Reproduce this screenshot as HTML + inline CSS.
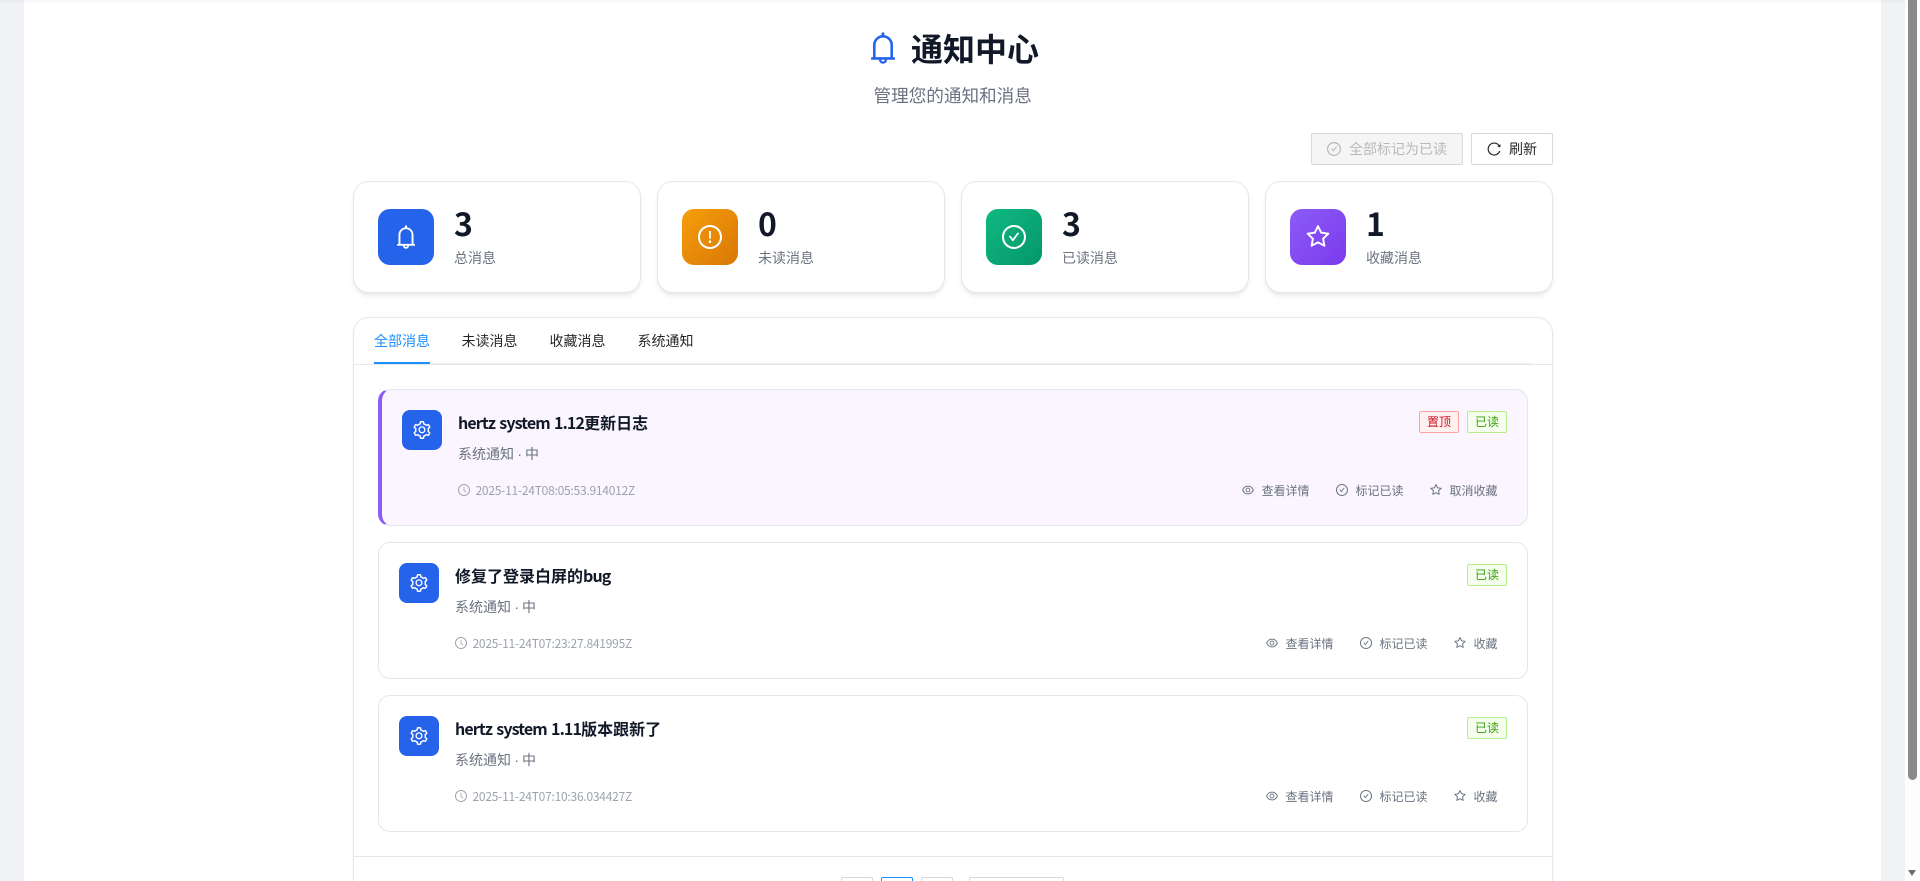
<!DOCTYPE html>
<html lang="zh-CN">
<head>
<meta charset="utf-8">
<title>通知中心</title>
<style>
*{box-sizing:border-box;margin:0;padding:0}
html,body{width:1920px;height:881px;overflow:hidden;background:#f0f2f5;font-family:"Noto Sans CJK SC","Liberation Sans",sans-serif;color:#111827}
#app{position:relative;width:1920px;height:881px;overflow:hidden;background:#f0f2f5}
svg.i{display:block;fill:currentColor}
.abs{position:absolute;white-space:nowrap}
#main{position:absolute;left:24px;top:0;width:1857px;height:881px;background:#fff}
#topfade{position:absolute;left:0;top:0;width:1905px;height:4px;background:linear-gradient(rgba(0,0,0,.045),rgba(0,0,0,0));z-index:5}
#scroll{position:absolute;left:1905px;top:0;width:15px;height:881px;background:#fdfdfd}
#thumb{position:absolute;left:3px;top:0;width:9px;height:780px;background:#8a8a8a;border-radius:0 0 5px 5px}
#arrow{position:absolute;left:3px;top:870px;width:0;height:0;border-left:4.5px solid transparent;border-right:4.5px solid transparent;border-top:6.5px solid #6f6f6f}
h1{position:absolute;left:911px;top:24px;font-size:32px;line-height:48px;font-weight:700;color:#111827;white-space:nowrap}
.sub{position:absolute;left:873.5px;top:83px;font-size:17.6px;line-height:26px;color:#6b7280;white-space:nowrap}
.btn{position:absolute;top:133px;height:32px;border:1px solid #d9d9d9;border-radius:2px;background:#fff;font-size:14px;line-height:30px;display:flex;align-items:center;padding:0 15px;color:rgba(0,0,0,.85);white-space:nowrap;font-family:inherit}
.btn svg{margin-right:8px}
.btn.dis{background:#f5f5f5;color:rgba(0,0,0,.25)}
.stat{position:absolute;top:181px;width:288px;height:112px;background:#fff;border:1px solid #e5e7eb;border-radius:16px;box-shadow:0 4px 6px -1px rgba(0,0,0,.08),0 2px 4px -2px rgba(0,0,0,.05)}
.stat .ic{position:absolute;left:24px;top:27px;width:56px;height:56px;border-radius:12px;display:flex;align-items:center;justify-content:center;color:#fff}
.stat .n{position:absolute;left:100px;top:18px;font-size:32px;line-height:46px;font-weight:700;color:#111827}
.stat .l{position:absolute;left:100px;top:65px;font-size:14px;line-height:22px;color:#6b7280;white-space:nowrap}
#panel{position:absolute;left:353px;top:317px;width:1200px;height:564px;background:#fff;border:1px solid #e5e7eb;border-bottom:none;border-radius:16px 16px 0 0;box-shadow:0 1px 3px rgba(0,0,0,.05)}
.tab{position:absolute;top:330px;font-size:14px;line-height:22px;color:rgba(0,0,0,.85);white-space:nowrap}
.tab.on{color:#1890ff}
#ink{position:absolute;left:374px;top:362px;width:56px;height:2px;background:#1890ff;z-index:2}
#navline{position:absolute;left:374px;top:363px;width:1158px;height:1px;background:#f0f0f0}
#panelline{position:absolute;left:354px;top:364px;width:1198px;height:1px;background:#e5e7eb}
.item{position:absolute;left:378px;width:1150px;height:137px;background:#fff;border:1px solid #e5e7eb;border-radius:12px}
.item.pin{background:#faf5ff;border-left:4px solid #8b5cf6}
.item .ic{position:absolute;left:20px;top:20px;width:40px;height:40px;border-radius:8px;background:#2563eb;color:#fff;display:flex;align-items:center;justify-content:center}
.item .t{position:absolute;left:76px;top:20px;font-size:16px;line-height:24px;font-weight:600;color:#111827;white-space:nowrap}
.item .t b{font-weight:600;letter-spacing:-.88px;word-spacing:1.5px}
.item .s{position:absolute;left:76px;top:53px;font-size:14px;line-height:22px;color:#6b7280;white-space:nowrap}
.item .s i{font-style:normal;font-family:"Liberation Sans",sans-serif;letter-spacing:-.5px}
.item .time{position:absolute;left:76px;top:90px;height:20px;display:flex;align-items:center;font-size:12px;color:#9ca3af;white-space:nowrap;letter-spacing:-.24px}
.item .time svg{margin-right:5.5px}
.tags{position:absolute;right:20px;top:21px;display:flex}
.tag{height:22px;width:40px;border:1px solid;border-radius:2px;font-size:12px;line-height:20px;text-align:center;margin-left:8px}
.tag.red{color:#cf1322;background:#fff1f0;border-color:#ffa39e}
.tag.green{color:#389e0d;background:#f6ffed;border-color:#b7eb8f}
.acts{position:absolute;right:29.5px;top:90px;height:20px;display:flex;align-items:center;font-size:12px;color:#6b7280;white-space:nowrap}
.acts span{display:flex;align-items:center;margin-left:27px}
.acts svg{margin-right:7px}
#sep{position:absolute;left:354px;top:856px;width:1198px;height:1px;background:#e5e7eb}
.pg{position:absolute;top:877px;height:4px;width:32px;border:1px solid #d9d9d9;border-bottom:none;border-radius:2px 2px 0 0;background:#fff}
.pg.on{border-color:#1890ff}
</style>
</head>
<body>
<svg width="0" height="0" style="position:absolute">
<defs>
<symbol id="bell" viewBox="64 64 896 896"><path d="M816 768h-24V428c0-141.1-104.3-257.7-240-277.1V112c0-22.1-17.9-40-40-40s-40 17.9-40 40v38.9c-135.7 19.4-240 136-240 277.1v340h-24c-17.7 0-32 14.3-32 32v32c0 4.4 3.6 8 8 8h216c0 61.8 50.2 112 112 112s112-50.2 112-112h216c4.4 0 8-3.6 8-8v-32c0-17.7-14.3-32-32-32zM512 888c-26.5 0-48-21.5-48-48h96c0 26.5-21.5 48-48 48zM304 768V428c0-55.6 21.6-107.8 60.9-147.1S456.4 220 512 220c55.6 0 107.8 21.6 147.1 60.9S720 372.4 720 428v340H304z"/></symbol>
<symbol id="excl" viewBox="64 64 896 896"><path d="M512 64C264.6 64 64 264.6 64 512s200.6 448 448 448 448-200.6 448-448S759.4 64 512 64zm0 820c-205.4 0-372-166.6-372-372s166.6-372 372-372 372 166.6 372 372-166.6 372-372 372z"/><path d="M464 688a48 48 0 1 0 96 0 48 48 0 1 0-96 0zm24-112h48c4.4 0 8-3.6 8-8V296c0-4.4-3.6-8-8-8h-48c-4.4 0-8 3.6-8 8v272c0 4.4 3.6 8 8 8z"/></symbol>
<symbol id="check" viewBox="64 64 896 896"><path d="M699 353h-46.9c-10.2 0-19.9 4.9-25.9 13.3L469 584.3l-71.2-98.8c-6-8.3-15.6-13.3-25.9-13.3H325c-6.5 0-10.3 7.4-6.5 12.7l124.6 172.8a31.8 31.8 0 0 0 51.7 0l210.6-292c3.9-5.3.1-12.7-6.4-12.7z"/><path d="M512 64C264.6 64 64 264.6 64 512s200.6 448 448 448 448-200.6 448-448S759.4 64 512 64zm0 820c-205.4 0-372-166.6-372-372s166.6-372 372-372 372 166.6 372 372-166.6 372-372 372z"/></symbol>
<symbol id="star" viewBox="64 64 896 896"><path d="M908.1 353.1l-253.9-36.9L540.7 86.1c-3.1-6.3-8.2-11.4-14.5-14.5-15.8-7.8-35-1.3-42.9 14.5L369.8 316.2l-253.9 36.9c-7 1-13.4 4.3-18.3 9.3a32.05 32.05 0 0 0 .6 45.3l183.7 179.1-43.4 252.9a31.95 31.95 0 0 0 46.4 33.7L512 754l227.1 119.4c6.2 3.3 13.4 4.4 20.3 3.2 17.4-3 29.1-19.5 26.1-36.9l-43.4-252.9 183.7-179.1c5-4.9 8.3-11.3 9.3-18.3 2.7-17.5-9.5-33.7-27-36.3zM664.8 561.6l36.1 210.3L512 672.7 323.1 772l36.1-210.3-152.8-149L417.6 382 512 190.7 606.4 382l211.2 30.7-152.8 148.9z"/></symbol>
<symbol id="eye" viewBox="64 64 896 896"><path d="M942.2 486.2C847.4 286.5 704.1 186 512 186c-192.2 0-335.4 100.5-430.2 300.3a60.3 60.3 0 0 0 0 51.5C176.6 737.5 319.9 838 512 838c192.2 0 335.4-100.5 430.2-300.3 7.7-16.2 7.7-35 0-51.5zM512 766c-161.3 0-279.4-81.8-362.7-254C232.6 339.8 350.7 258 512 258c161.3 0 279.4 81.8 362.7 254C791.5 684.2 673.4 766 512 766zm-4-430c-97.2 0-176 78.8-176 176s78.8 176 176 176 176-78.8 176-176-78.8-176-176-176zm0 288c-61.9 0-112-50.1-112-112s50.1-112 112-112 112 50.1 112 112-50.1 112-112 112z"/></symbol>
<symbol id="clock" viewBox="64 64 896 896"><path d="M512 64C264.6 64 64 264.6 64 512s200.6 448 448 448 448-200.6 448-448S759.4 64 512 64zm0 820c-205.4 0-372-166.6-372-372s166.6-372 372-372 372 166.6 372 372-166.6 372-372 372z"/><path d="M686.7 638.6L544.1 535.5V288c0-4.4-3.6-8-8-8H488c-4.4 0-8 3.6-8 8v275.4c0 2.6 1.2 5 3.3 6.5l165.4 120.6c3.6 2.6 8.6 1.8 11.2-1.7l28.6-39c2.6-3.7 1.8-8.7-1.8-11.2z"/></symbol>
<symbol id="reload" viewBox="64 64 896 896"><path d="M909.1 209.3l-56.4 44.1C775.8 155.1 656.2 92 521.9 92 290 92 102.3 279.5 102 511.5 101.7 743.7 289.8 932 521.9 932c181.3 0 335.8-115 394.6-276.1 1.5-4.2-.7-8.9-4.9-10.3l-56.7-19.5a8 8 0 0 0-10.1 4.8c-1.8 5-3.8 10-5.9 14.9-17.3 41-42.1 77.8-73.7 109.4A344.77 344.77 0 0 1 655.9 829c-42.3 17.9-87.4 27-133.8 27-46.5 0-91.5-9.1-133.8-27A341.5 341.5 0 0 1 279 755.2a342.16 342.16 0 0 1-73.7-109.4c-17.9-42.4-27-87.4-27-133.9s9.1-91.5 27-133.9c17.3-41 42.1-77.8 73.7-109.4 31.6-31.6 68.4-56.4 109.3-73.8 42.3-17.9 87.4-27 133.8-27 46.5 0 91.5 9.1 133.8 27a341.5 341.5 0 0 1 109.3 73.8c9.9 9.9 19.2 20.4 27.8 31.4l-60.2 47a8 8 0 0 0 3 14.1l175.6 43c5 1.2 9.9-2.6 9.9-7.7l.8-180.9c-.1-6.6-7.8-10.3-13-6.2z"/></symbol>
<symbol id="gear" viewBox="64 64 896 896"><path d="M924.8 625.7l-65.5-56c3.1-19 4.7-38.4 4.7-57.8s-1.6-38.8-4.7-57.8l65.5-56a32.03 32.03 0 0 0 9.3-35.2l-.9-2.6a443.74 443.74 0 0 0-79.7-137.9l-1.8-2.1a32.12 32.12 0 0 0-35.1-9.5l-81.3 28.9c-30-24.6-63.5-44-99.7-57.6l-15.7-85a32.05 32.05 0 0 0-25.8-25.7l-2.7-.5c-52.1-9.4-106.9-9.4-159 0l-2.7.5a32.05 32.05 0 0 0-25.8 25.7l-15.8 85.4a351.86 351.86 0 0 0-99 57.4l-81.9-29.1a32 32 0 0 0-35.1 9.5l-1.8 2.1a446.02 446.02 0 0 0-79.7 137.9l-.9 2.6c-4.5 12.5-.8 26.5 9.3 35.2l66.3 56.6c-3.1 18.8-4.6 38-4.6 57.1 0 19.2 1.5 38.4 4.6 57.1L99 625.5a32.03 32.03 0 0 0-9.3 35.2l.9 2.6c18.1 50.4 44.9 96.9 79.7 137.9l1.8 2.1a32.12 32.12 0 0 0 35.1 9.5l81.9-29.1c29.8 24.5 63.1 43.9 99 57.4l15.8 85.4a32.05 32.05 0 0 0 25.8 25.7l2.7.5a449.4 449.4 0 0 0 159 0l2.7-.5a32.05 32.05 0 0 0 25.8-25.7l15.7-85a350 350 0 0 0 99.7-57.6l81.3 28.9a32 32 0 0 0 35.1-9.5l1.8-2.1c34.8-41.1 61.6-87.5 79.7-137.9l.9-2.6c4.5-12.3.8-26.3-9.3-35zM788.3 465.9c2.5 15.1 3.8 30.6 3.8 46.1s-1.3 31-3.8 46.1l-6.6 40.1 74.7 63.9a370.03 370.03 0 0 1-42.6 73.6L721 702.8l-31.4 25.8c-23.9 19.6-50.5 35-79.3 45.8l-38.1 14.3-17.9 97a377.5 377.5 0 0 1-85 0l-17.9-97.2-37.8-14.5c-28.5-10.8-55-26.2-78.7-45.7l-31.4-25.9-93.4 33.2c-17-22.9-31.2-47.6-42.6-73.6l75.5-64.5-6.5-40c-2.4-14.9-3.7-30.3-3.7-45.5 0-15.3 1.2-30.6 3.7-45.5l6.5-40-75.5-64.5c11.3-26.1 25.6-50.7 42.6-73.6l93.4 33.2 31.4-25.9c23.7-19.5 50.2-34.9 78.7-45.7l37.9-14.3 17.9-97.2c28.1-3.2 56.8-3.2 85 0l17.9 97 38.1 14.3c28.7 10.8 55.4 26.2 79.3 45.8l31.4 25.8 92.8-32.9c17 22.9 31.2 47.6 42.6 73.6L781.8 426l6.5 39.9zM512 326c-97.2 0-176 78.8-176 176s78.8 176 176 176 176-78.8 176-176-78.8-176-176-176zm79.2 255.2A111.6 111.6 0 0 1 512 614c-29.9 0-58-11.7-79.2-32.8A111.6 111.6 0 0 1 400 502c0-29.9 11.7-58 32.8-79.2C454 401.6 482.1 390 512 390c29.9 0 58 11.6 79.2 32.8A111.6 111.6 0 0 1 624 502c0 29.9-11.7 58-32.8 79.2z"/></symbol>
</defs>
</svg>

<div id="app">
<div id="main"></div>
<div id="topfade"></div>

<svg class="i abs" style="left:867px;top:32px;color:#2563eb" width="32" height="32"><use href="#bell"/></svg>
<h1>通知中心</h1>
<div class="sub">管理您的通知和消息</div>

<div class="btn dis" style="left:1311px;width:152px"><svg class="i" width="14" height="14"><use href="#check"/></svg>全部标记为已读</div>
<div class="btn" style="left:1471px;width:82px"><svg class="i" width="14" height="14"><use href="#reload"/></svg>刷新</div>

<div class="stat" style="left:353px">
  <div class="ic" style="background:#2563eb"><svg class="i" width="24" height="24"><use href="#bell"/></svg></div>
  <div class="n">3</div><div class="l">总消息</div>
</div>
<div class="stat" style="left:657px">
  <div class="ic" style="background:linear-gradient(135deg,#f59e0b,#d97706)"><svg class="i" width="24" height="24"><use href="#excl"/></svg></div>
  <div class="n">0</div><div class="l">未读消息</div>
</div>
<div class="stat" style="left:961px">
  <div class="ic" style="background:linear-gradient(135deg,#10b981,#059669)"><svg class="i" width="24" height="24"><use href="#check"/></svg></div>
  <div class="n">3</div><div class="l">已读消息</div>
</div>
<div class="stat" style="left:1265px">
  <div class="ic" style="background:linear-gradient(135deg,#8b5cf6,#7c3aed)"><svg class="i" width="24" height="24"><use href="#star"/></svg></div>
  <div class="n">1</div><div class="l">收藏消息</div>
</div>

<div id="panel"></div>
<div class="tab on" style="left:374px">全部消息</div>
<div class="tab" style="left:461.5px">未读消息</div>
<div class="tab" style="left:549.5px">收藏消息</div>
<div class="tab" style="left:637.5px">系统通知</div>
<div id="ink"></div>
<div id="navline"></div>
<div id="panelline"></div>

<div class="item pin" style="top:389px">
  <div class="ic"><svg class="i" width="18" height="18"><use href="#gear"/></svg></div>
  <div class="t"><b>hertz system 1.12</b>更新日志</div>
  <div class="s">系统通知<i> · </i>中</div>
  <div class="time"><svg class="i" width="12" height="12"><use href="#clock"/></svg>2025-11-24T08:05:53.914012Z</div>
  <div class="tags"><div class="tag red">置顶</div><div class="tag green">已读</div></div>
  <div class="acts">
    <span><svg class="i" width="12" height="12"><use href="#eye"/></svg>查看详情</span>
    <span><svg class="i" width="12" height="12"><use href="#check"/></svg>标记已读</span>
    <span><svg class="i" width="12" height="12"><use href="#star"/></svg>取消收藏</span>
  </div>
</div>

<div class="item" style="top:542px">
  <div class="ic"><svg class="i" width="18" height="18"><use href="#gear"/></svg></div>
  <div class="t">修复了登录白屏的<b>bug</b></div>
  <div class="s">系统通知<i> · </i>中</div>
  <div class="time"><svg class="i" width="12" height="12"><use href="#clock"/></svg>2025-11-24T07:23:27.841995Z</div>
  <div class="tags"><div class="tag green">已读</div></div>
  <div class="acts">
    <span><svg class="i" width="12" height="12"><use href="#eye"/></svg>查看详情</span>
    <span><svg class="i" width="12" height="12"><use href="#check"/></svg>标记已读</span>
    <span><svg class="i" width="12" height="12"><use href="#star"/></svg>收藏</span>
  </div>
</div>

<div class="item" style="top:695px">
  <div class="ic"><svg class="i" width="18" height="18"><use href="#gear"/></svg></div>
  <div class="t"><b>hertz system 1.11</b>版本跟新了</div>
  <div class="s">系统通知<i> · </i>中</div>
  <div class="time"><svg class="i" width="12" height="12"><use href="#clock"/></svg>2025-11-24T07:10:36.034427Z</div>
  <div class="tags"><div class="tag green">已读</div></div>
  <div class="acts">
    <span><svg class="i" width="12" height="12"><use href="#eye"/></svg>查看详情</span>
    <span><svg class="i" width="12" height="12"><use href="#check"/></svg>标记已读</span>
    <span><svg class="i" width="12" height="12"><use href="#star"/></svg>收藏</span>
  </div>
</div>

<div id="sep"></div>
<div class="pg" style="left:841px"></div>
<div class="pg on" style="left:881px"></div>
<div class="pg" style="left:921px"></div>
<div class="pg" style="left:969px;width:95px"></div>

<div id="scroll"><div id="thumb"></div><div id="arrow"></div></div>
</div>
</body>
</html>
